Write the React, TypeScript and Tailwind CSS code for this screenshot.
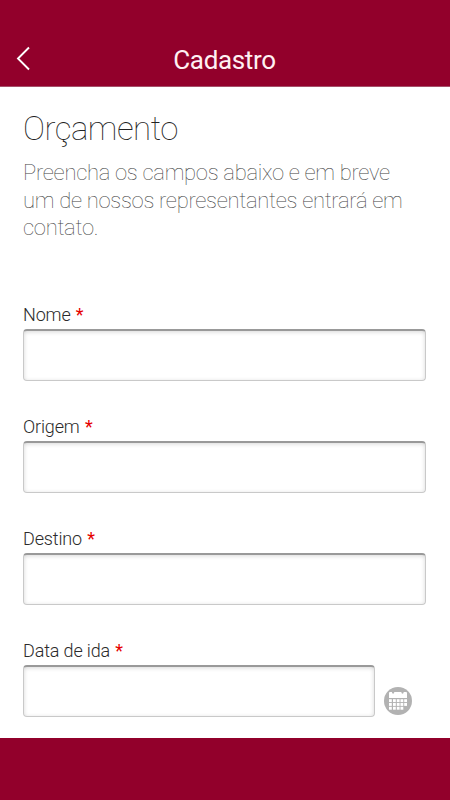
import React from "react";

function Field({ label, children }: { label: string; children?: React.ReactNode }) {
  return (
    <div className="h-28">
      <label className="block h-[26px] pt-px text-[18px] leading-[22px] font-light tracking-[-0.15px] text-[#2b2b2b]">
        {label} <span className="ml-px font-normal text-[#e60000]">*</span>
      </label>
      <div className="flex">
        <input
          aria-label={label}
          className="h-[52px] min-w-0 flex-1 rounded-[4px] border border-t-2 border-[#c9c9c9] border-t-[#999] bg-white px-3 shadow-[inset_0_1px_4px_rgba(0,0,0,0.16)] outline-none"
        />
        {children}
      </div>
    </div>
  );
}

function CalendarIcon() {
  const columns = [389, 393, 396.8, 400.5, 404.2];
  return (
    <svg className="h-7 w-7" viewBox="384 687 28 28" aria-hidden="true">
      <circle cx="398" cy="701" r="14" fill="#b2b2b2" />
      <path
        d="M389 693q0-1 1-1h2v.6q0 1.1 1.1 1.1t1.1-1.1v-.6h7.2v.6q0 1.1 1.1 1.1t1.1-1.1v-.6h2.4q1 0 1 1v5h-18z"
        fill="white"
      />
      {[699.2, 703, 706.8].map((y, row) =>
        columns.slice(0, row === 2 ? 4 : 5).map((x) => (
          <rect key={`${x}-${y}`} x={x} y={y} width="2.8" height="2.9" fill="white" />
        ))
      )}
    </svg>
  );
}

export default function App() {
  return (
    <div className="flex h-[800px] w-[450px] flex-col overflow-hidden bg-white font-[Roboto,sans-serif]">
      <header className="grid h-[87px] shrink-0 grid-cols-[60px_1fr_61px] border-b border-[#a5506a] bg-[#92002b] pt-[42px] text-white">
        <button aria-label="Voltar" className="h-8 pl-4">
          <svg className="h-8 w-4" viewBox="0 0 16 32" fill="none" stroke="currentColor" strokeWidth="1.9">
            <path d="M13 5.5 2 16.5l11 11" />
          </svg>
        </button>
        <h1 className="text-center text-[26px] leading-9 font-normal tracking-[-0.35px] text-[#fff0f3]">Cadastro</h1>
      </header>
      <main className="flex-1 overflow-hidden px-[23px] pt-[22px]">
        <h2 className="text-[33px] leading-[40px] font-thin tracking-[-0.5px] text-[#222]">Orçamento</h2>
        <p className="mt-[10px] h-[144px] text-[22px] leading-[27.7px] font-thin tracking-[-0.29px] text-[#444]">
          Preencha os campos abaixo e em breve
          <br />
          um de nossos representantes entrará em
          <br />
          contato.
        </p>
        <form className="w-[403px]">
          <Field label="Nome" />
          <Field label="Origem" />
          <Field label="Destino" />
          <Field label="Data de ida">
            <div className="flex w-[51px] pt-[22px] pl-[9px]">
              <CalendarIcon />
            </div>
          </Field>
        </form>
      </main>
      <footer className="h-[62px] shrink-0 bg-[#92002b]" />
    </div>
  );
}
